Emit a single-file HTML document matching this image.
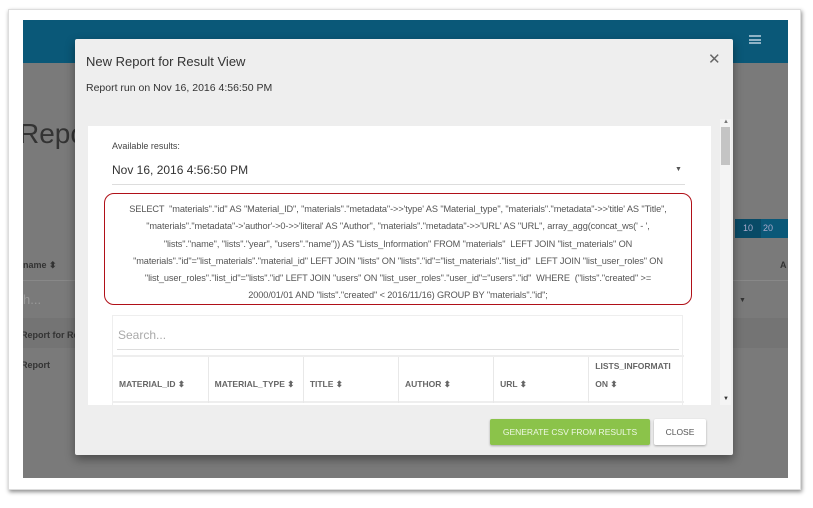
<!DOCTYPE html>
<html><head><style>
*{margin:0;padding:0;box-sizing:border-box}
body{width:813px;height:508px;background:#fff;position:relative;overflow:hidden;font-family:"Liberation Sans",sans-serif;}
.frame{position:absolute;left:8px;top:9px;width:793px;height:481px;background:#fff;border:1px solid #ddd;box-shadow:1px 2px 4px rgba(0,0,0,.45)}
.screen{position:absolute;left:23px;top:20px;width:765px;height:458px;background:#7a7a7a;overflow:hidden}
.bar{position:absolute;left:0;top:0;width:765px;height:43px;background:#0a5878}
.abs{position:absolute}
.modal{position:absolute;left:75px;top:39px;width:658px;height:416px;background:#eee;box-shadow:0 4px 10px rgba(0,0,0,.4);border-radius:2px}
.card{position:absolute;left:13px;top:87px;width:623px;height:279px;background:#fff;overflow:hidden}
.sql{position:absolute;left:29px;top:154px;width:588px;height:112px;border:1.5px solid #b01018;border-radius:10px;padding:7px 2px;text-align:center;font-size:9.2px;letter-spacing:-0.1px;line-height:17.3px;color:#555;white-space:nowrap}
th{font-size:8.5px;color:#666;text-align:left;font-weight:bold;vertical-align:bottom;padding:0 6px 10px;border-right:1px solid #e8e8e8;line-height:18px;white-space:nowrap;width:94px}
.btn{position:absolute;top:380px;height:26px;font-size:8.5px;line-height:26px;text-align:center;border-radius:2px;box-shadow:0 1px 2px rgba(0,0,0,.3)}
</style></head><body>
<div class="frame"></div>
<div class="screen">
 <div class="bar"></div>
 <div class="abs" style="left:726px;top:15px;width:12px;height:9px;border-top:2px solid #8fb3c6;border-bottom:2px solid #8fb3c6"><div style="margin-top:1.5px;height:2px;background:#8fb3c6"></div></div>
 <div class="abs" style="left:-4px;top:98px;font-size:28px;color:#333">Report</div>
 <div class="abs" style="left:0;top:240px;font-size:9px;color:#333;font-weight:bold">name ⬍</div>
 <div class="abs" style="left:0;top:260px;width:765px;border-top:1px solid #888"></div>
 <div class="abs" style="left:0;top:272px;font-size:13px;color:#999">h...</div>
 <div class="abs" style="left:0;top:298px;width:765px;height:30px;background:#747474"></div>
 <div class="abs" style="left:-2px;top:310px;font-size:9px;color:#333;font-weight:bold">Report for Res</div>
 <div class="abs" style="left:-2px;top:340px;font-size:9px;color:#333;font-weight:bold">Report</div>
 <div class="abs" style="left:712px;top:199px;width:53px;height:19px;background:#0a5878"></div>
 <div class="abs" style="left:712px;top:199px;width:26px;height:19px;background:#084a66;color:#aac;font-size:9px;line-height:19px;text-align:center">10</div>
 <div class="abs" style="left:740px;top:199px;font-size:9px;color:#aac;line-height:19px">20</div>
 <div class="abs" style="left:757px;top:240px;font-size:9px;color:#333;font-weight:bold">A</div>
 <div class="abs" style="left:716px;top:277px;font-size:7px;color:#333">▼</div>
</div>
<div class="modal">
 <div class="abs" style="left:11px;top:15px;font-size:13px;color:#333">New Report for Result View</div>
 <div class="abs" style="left:633px;top:11px;font-size:15px;color:#666">✕</div>
 <div class="abs" style="left:11px;top:43px;font-size:10.5px;color:#333">Report run on Nov 16, 2016 4:56:50 PM</div>
 <div class="abs" style="left:645px;top:80px;width:11px;height:286px;background:#f4f4f4"></div>
 <div class="abs" style="left:646px;top:88px;width:9px;height:38px;background:#c4c4c4"></div>
 <div class="abs" style="left:648px;top:80px;font-size:6px;color:#777">▲</div>
 <div class="abs" style="left:648px;top:357px;font-size:6px;color:#333">▼</div>
 <div class="card">
  <div class="abs" style="left:24px;top:15px;font-size:9px;color:#444">Available results:</div>
  <div class="abs" style="left:24px;top:37px;font-size:12px;color:#333">Nov 16, 2016 4:56:50 PM</div>
  <div class="abs" style="left:587px;top:40px;font-size:7px;color:#555">▼</div>
  <div class="abs" style="left:24px;top:58px;width:573px;border-top:1px solid #ddd"></div>
  <div class="abs" style="left:24px;top:189px;width:571px;height:100px;border:1px solid #eee">
   <div class="abs" style="left:5px;top:12px;font-size:12px;color:#aaa">Search...</div>
   <div class="abs" style="left:4px;top:33px;width:562px;border-top:1px solid #ddd"></div>
   <div class="abs" style="left:0;top:39px;width:571px;height:48px;border-top:2px solid #eee;border-bottom:2px solid #eee">
    <table style="border-collapse:collapse;height:44px;width:571px;table-layout:fixed"><tr>
     <th>MATERIAL_ID ⬍</th><th>MATERIAL_TYPE ⬍</th><th>TITLE ⬍</th><th>AUTHOR ⬍</th><th>URL ⬍</th><th style="border:none">LISTS_INFORMATI<br>ON ⬍</th></tr></table>
   </div>
  </div>
 </div>
 <div class="sql">SELECT &nbsp;"materials"."id" AS "Material_ID", "materials"."metadata"-&gt;&gt;'type' AS "Material_type", "materials"."metadata"-&gt;&gt;'title' AS "Title",<br>"materials"."metadata"-&gt;'author'-&gt;0-&gt;&gt;'literal' AS "Author", "materials"."metadata"-&gt;&gt;'URL' AS "URL", array_agg(concat_ws(' - ',<br>"lists"."name", "lists"."year", "users"."name")) AS "Lists_Information" FROM "materials" &nbsp;LEFT JOIN "list_materials" ON<br>"materials"."id"="list_materials"."material_id" LEFT JOIN "lists" ON "lists"."id"="list_materials"."list_id" &nbsp;LEFT JOIN "list_user_roles" ON<br>"list_user_roles"."list_id"="lists"."id" LEFT JOIN "users" ON "list_user_roles"."user_id"="users"."id" &nbsp;WHERE &nbsp;("lists"."created" &gt;=<br>2000/01/01 AND "lists"."created" &lt; 2016/11/16) GROUP BY "materials"."id";</div>
 <div class="btn" style="left:415px;width:160px;background:#8bc34a;color:#eef8e4">GENERATE CSV FROM RESULTS</div>
 <div class="btn" style="left:579px;width:52px;background:#fff;color:#555">CLOSE</div>
</div>
</body></html>
